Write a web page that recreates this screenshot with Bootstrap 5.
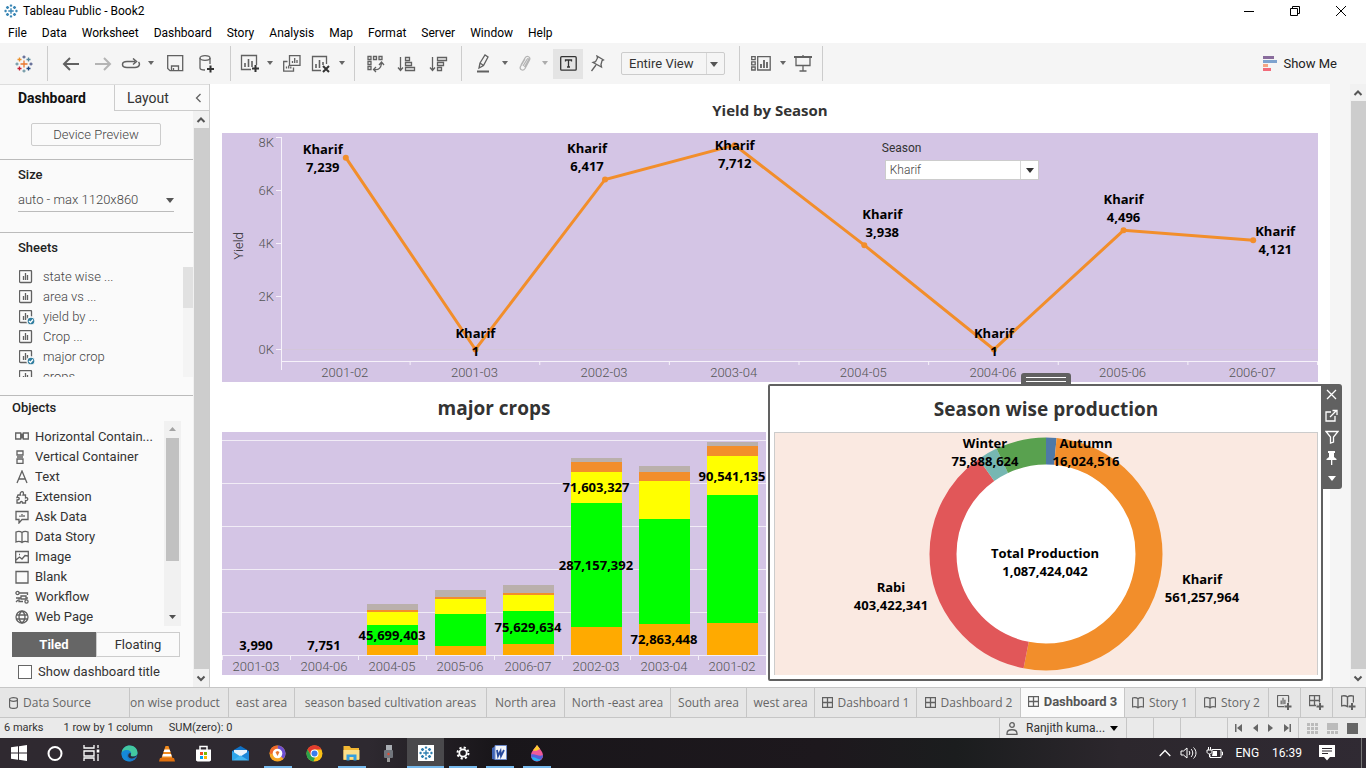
<!DOCTYPE html>
<html lang="en">
<head>
<meta charset="utf-8">
<meta name="viewport" content="width=device-width, initial-scale=1">
<title>Tableau Public - Book2</title>
<link rel="stylesheet" href="https://cdn.jsdelivr.net/npm/bootstrap@5.3.0/dist/css/bootstrap.min.css">
<style>
:root{--ui:Roboto,"Liberation Sans",sans-serif;--viz:"Open Sans","Noto Sans",sans-serif;--lilac:#d4c5e5;--line:#ccc;--dark:#616161}
body{font:13px/20px var(--ui);color:#333;background:#fff}
button,select,input{font:inherit;color:inherit}
svg{display:block;flex:none}
.ico{fill:none;stroke:#616161;stroke-width:1.3}
.app{min-height:100vh}
.plain{border:0;background:none;padding:0}
a{color:inherit;text-decoration:none}
/* window chrome */
.titlebar{height:22px;font-size:12px;color:#000}
.winbtns{gap:34px;padding-right:19px}
.menubar{height:22px;margin-bottom:-1px;font-size:12px;color:#000;gap:15px;padding-left:8px}
.toolbar{height:41px;background:#f5f5f5;padding-left:8px}
.toolbar button{height:30px;display:flex;align-items:center;justify-content:center}
.b-l{width:32px}.b-m{width:28px}.b-s{width:24px}.b-c{width:16px}
.b-on{width:30px;background:#e4e4e4!important}
.vsep{width:1px;height:35px;background:#ccc;margin:0 7px}
.combo{position:relative}
.combo select{appearance:none;border:1px solid #ccc;background:transparent;border-radius:2px}
.combo::after{content:"";position:absolute;right:7px;top:50%;margin-top:-2px;border:4px solid transparent;border-top:5px solid #555;border-bottom:0;pointer-events:none}
.combo.split::before{content:"";position:absolute;right:18px;top:1px;bottom:1px;width:1px;background:#d8d8d8}
.view-sel{margin:0 7px 0 10px;width:104px}
.view-sel select{width:100%;height:23px;padding:0 0 0 7px;line-height:18px}
.toolbar .showme{margin-right:29px;gap:6px;color:#222}
/* side pane */
.side{width:210px;background:#fafafa;border-right:1px solid var(--line)}
.side-tabs{height:27px;border-top:1px solid #ddd;font-size:14px}
.side-tabs .t1{width:114px;padding-left:18px;font-weight:700;color:#111;text-align:left}
.side-tabs .t2{border-left:1px solid var(--line);border-bottom:1px solid var(--line)}
.sbar{background:#f1f1f1;width:16px}
.sbar .thumb{background:#cdcdcd;margin:0 0 0 1px}
.side hr{margin:0;border-color:#bbb;opacity:1}
.side h2{font-size:13px;line-height:20px;margin:0;font-weight:500;color:#222}
.preview{width:130px;height:23px;border:1px solid var(--line);background:#fafafa;border-radius:2px;margin:12px 0 13px 31px;color:#444;line-height:20px;padding:0}
.size-sec{height:72px;padding:5px 18px 0}
.size-sel{width:156px;margin-top:3px}
.size-sel select{border-width:0 0 1px;border-color:#bbb;width:100%;height:24px;padding:0;border-radius:0;color:#444}
.size-sel::after{right:0}
.side h2.sheets-h{padding:5px 0 0 18px;margin-bottom:9px}
.sheets{height:110px;color:#444}
.sheets ul,.objs ul{margin:0;padding:0;list-style:none}
.sheets li{height:20px;gap:7px;padding-left:19px}
.mini{width:10px;background:linear-gradient(#e1e1e1 0 41px,#f4f4f4 41px)}
.side hr.objs-rule{margin-top:18px}
.side h2.objs-h{padding:2px 0 0 12px;margin-bottom:3px}
.objs{height:206px;padding-right:12px}
.objs ul{padding-top:6px}
.objs li{height:20px;gap:6px;padding-left:15px;color:#333}
.objs svg{width:14px;height:14px}
.objs .obar{width:17px;background:#f1f1f1;height:205px}
.objs .obar svg{width:17px;height:17px}
.othumb{width:13px;height:123px;margin-left:2px;background:#c1c1c1}
.toggle{height:25px;width:168px;margin:5px 0 0 12px}
.toggle button{width:50%;border:1px solid var(--line);background:#fafafa;padding:0}
.toggle .on{background:#666;border-color:#666;color:#fff;font-weight:700}
.tick{appearance:none;width:14px;height:14px;border:1px solid #666;background:#fff;margin:0}
.tick-row{gap:6px;margin:5px 0 0 18px}
.light{font-weight:300}
/* dashboard */
.pane-title{font-family:var(--viz);font-weight:700;color:#333;margin:0;text-align:center}
.t-s{font-size:15px;line-height:49px;padding-top:2px;height:49px}
.t-l{font-size:19px;line-height:48px;height:48px}
.chart-line{margin:0 12px 2px;position:relative}
.chart-line svg,.donut svg{width:100%}
.axis{font:300 13px var(--ui);fill:#555}
.lbl{font:700 13px var(--viz);fill:#000}
.filter{top:5px;left:60.2%;font-size:12px}
.filter select{height:20px;width:100%;background:#fff;color:#444;padding:0 4px;border-radius:0;line-height:18px}
.filter .combo{margin:2px 0 0 3px;width:154px}
.filter .combo::after{right:5px;border-top-color:#333}
.bottom{display:grid;grid-template-columns:544fr 555fr;gap:2px;padding:0 7px 6px 12px}
.bars{background:var(--lilac);margin-bottom:6px}
.plot{border-bottom:1px solid #f4f0f8;background:repeating-linear-gradient(to top,transparent 0 42px,#f1ecf6 42px 43px);height:224px}
.col-bar{flex:1 1 0;min-width:0;display:flex;flex-direction:column;justify-content:flex-end;align-items:center}
.seg{width:75%;display:flex;align-items:center;justify-content:center;font:700 13px/14px var(--viz);color:#000;white-space:nowrap}
.seg span{position:relative}
.xaxis span{flex:1 1 0;text-align:center;color:#555;font-weight:300;height:19px;line-height:22px;background:linear-gradient(#f4f0f8,#f4f0f8) 0 0/1px 4px no-repeat}
.picked{border:2px solid var(--dark);border-radius:2px;position:relative;padding:0 3px 4px 4px}
.t-in{height:46px;line-height:46px}
.donut{background:#fae9e1;border:1px solid var(--line);border-bottom:0}
.grip{position:absolute;left:50%;top:-13px;width:50px;height:12px;margin-left:-25px;background:var(--dark);border-radius:3px 3px 0 0;padding:4px 5px}
.grip::before{content:"";display:block;height:5px;border:solid #fff;border-width:1px 0}
.tools{position:absolute;left:100%;top:-2px;width:21px;height:105px;background:var(--dark);border-radius:0 3px 3px 0}
.tools .ico{stroke:#fff}
.tools button{height:21px;display:flex;align-items:center;justify-content:center}
.gutter{width:20px;background:#f5f5f5}
/* bottom strips */
.tabs{display:grid;grid-template-columns:130fr 99fr 66fr 192fr 78fr 106fr 76fr 68fr 102fr 104fr 104fr 71fr 73fr 32fr 32fr 33fr;height:31px;border-top:1px solid #c6c6c6;border-bottom:1px solid #c6c6c6;background:#e6e6e6;font:12px/16px var(--viz);color:#666}
.tabs a{display:flex;align-items:center;justify-content:center;gap:5px;border-right:1px solid #c6c6c6;white-space:nowrap;overflow:hidden}
.tabs a:nth-child(2){justify-content:flex-start}
.tabs a:first-child{justify-content:flex-start;padding-left:9px}
.tabs .cur{background:#fafafa;font:700 13px var(--ui);color:#555;padding-bottom:2px}
.status{height:20px;background:#eaeaea;font-size:11px}
.status .cell{border-left:1px solid #c6c6c6;height:20px}
.status .user{width:127px;padding-left:6px;font-size:12px}
.status>span{white-space:pre}
.c27{width:27px}.c47{width:47px}.nav-ic{width:71px;padding:0 2px}.views{width:68px;padding:0 3px}
.taskbar{height:30px;background:linear-gradient(90deg,#2f2930 0,#2e2930 27%,#19161a 36%,#1d181d 60%,#1b1d1e 70%,#2c272d 82%,#302a33);color:#fff;font-size:12px}
.taskbar button{width:37px;height:30px;display:flex;align-items:center;justify-content:center;position:relative}
.taskbar .run::after{content:"";position:absolute;left:5px;right:4px;bottom:0;height:2px;background:#76b9ed}
.taskbar .act{background:#4a494c}
.taskbar .act::after{left:0;right:0}
.tray{gap:9px;padding-right:4px}
.desk{width:1px;height:30px;background:#777;margin-left:8px}
</style>
</head>
<body>
<svg width="0" height="0" class="position-absolute" aria-hidden="true">
<symbol id="caret" viewBox="0 0 8 5"><path d="M1 0h6L4 4z" fill="#666" stroke="none"/></symbol>
<symbol id="sheet" viewBox="0 0 14 14"><rect x=".5" y=".5" width="12" height="12" rx="1"/><path d="M4.500 10V6M6.500 10V3M8.500 10V5"/></symbol>
<symbol id="dash" viewBox="0 0 12 12"><path d="M.5.5h10v10H.5zM5.500.5v10M.5 5.500h10"/></symbol>
<symbol id="story" viewBox="0 0 12 12"><path d="M.5 1c2-.6 4-.4 5.500.8C7.500.6 9.500.4 11.500 1v9c-2-.6-4-.4-5.500.8C4.500 9.600 2.500 9.400.5 10zM6 2v9"/></symbol>
<symbol id="tab" viewBox="0 0 18 18"><path d="M9 5.500v7M5.500 9h7M9 .5v3M7.500 2h3M9 14.500v3M7.500 16h3M2 7.500v3M.5 9h3M16 7.500v3M14.500 9h3M4.500 2.500v4M2.500 4.500h4M13.500 2.500v4M11.500 4.500h4M4.500 11.500v4M2.500 13.500h4M13.500 11.500v4M11.500 13.500h4"/></symbol>
<symbol id="up" viewBox="0 0 16 17"><path d="M4.500 11 8 7.500 11.500 11" fill="none" stroke="#555" stroke-width="2"/></symbol>
<symbol id="down" viewBox="0 0 16 17"><path d="M4.500 7 8 10.500 11.500 7" fill="none" stroke="#555" stroke-width="2"/></symbol>
</svg>

<div class="app d-flex flex-column">
<header>
 <div class="titlebar d-flex align-items-center justify-content-between">
  <div class="d-flex align-items-center"><svg width="15" height="15" class="ico ms-1 me-1" stroke-width="2"><use href="#tab" width="14" height="14" style="stroke:#3b87b5;stroke-width:1.800"/></svg>Tableau Public - Book2</div>
  <div class="winbtns d-flex align-items-center">
   <button class="plain" aria-label="Minimize"><svg width="12" height="12" stroke="#000"><path d="M1 6.500h10"/></svg></button>
   <button class="plain" aria-label="Restore"><svg width="12" height="12" stroke="#000" fill="none"><path d="M1.500 3.500h7v7h-7zM3.500 3V1.500h7v7H9"/></svg></button>
   <button class="plain" aria-label="Close"><svg width="12" height="12" stroke="#000"><path d="M1 1l10 10M11 1L1 11"/></svg></button>
  </div>
 </div>
 <nav class="menubar d-flex align-items-center">
  <a href="#">File</a><a href="#">Data</a><a href="#">Worksheet</a><a href="#">Dashboard</a><a href="#">Story</a><a href="#">Analysis</a><a href="#">Map</a><a href="#">Format</a><a href="#">Server</a><a href="#">Window</a><a href="#">Help</a>
 </nav>
 <div class="toolbar d-flex align-items-center" role="toolbar">
  <button class="plain b-l" aria-label="Start page"><svg width="18" height="18" fill="none" stroke-width="1.300"><path stroke="#e8762d" d="M9 5.500v7M5.500 9h7"/><path stroke="#5c6692" d="M9 .5v3M7.500 2h3"/><path stroke="#7199a6" d="M9 14.500v3M7.500 16h3M2 7.500v3M.5 9h3"/><path stroke="#eb912c" d="M4.500 2.500v4M2.500 4.500h4"/><path stroke="#59879b" d="M13.500 2.500v4M11.500 4.500h4"/><path stroke="#c72035" d="M4.500 11.500v4M2.500 13.500h4"/><path stroke="#1f447e" d="M13.500 11.500v4M11.500 13.500h4"/><path stroke="#5c6692" d="M16 7.500v3M14.500 9h3"/></svg></button>
  <span class="vsep"></span>
  <button class="plain b-l" aria-label="Undo"><svg class="ico" width="18" height="16" style="stroke-width:2"><path d="M17 8H2M8 2 2 8l6 6"/></svg></button>
  <button class="plain b-l" aria-label="Redo"><svg class="ico" width="18" height="16" style="stroke-width:2;stroke:#b4b4b4"><path d="M1 8h15M10 2l6 6-6 6"/></svg></button>
  <button class="plain b-s" aria-label="Replay"><svg class="ico" width="20" height="12"><path d="M11 9.500H6c-6 0-6-6 0-6h8M11 9.500h3c5 0 5-4 3.500-5.500M12 .5l3.500 3L12 6.500" stroke-width="1.500"/></svg></button>
  <button class="plain b-c" aria-label="Replay menu"><svg width="8" height="5"><use href="#caret"/></svg></button>
  <button class="plain b-l" aria-label="Save"><svg class="ico" width="17" height="17"><path d="M.7.7h15v15H3L.7 13.500zM4.500 15.500V11h7v4.500M6.500 13v2.500"/></svg></button>
  <button class="plain b-l" aria-label="New data source"><svg class="ico" width="17" height="18"><ellipse cx="6" cy="3" rx="5" ry="2.300"/><path d="M1 3v10c0 1 2 2 5 2M11 3v6"/><path d="M11.500 10.500v7M8 14h7" stroke="#333" stroke-width="2"/></svg></button>
  <span class="vsep"></span>
  <button class="plain b-s" aria-label="New sheet"><svg class="ico" width="20" height="19"><path d="M11 15.500H1.500V1.500h15V11"/><path d="M5 13V9M8.500 13V5M12 13V7" stroke-width="1.600"/><path d="M15.500 11v7M12 14.500h7" stroke="#333" stroke-width="2"/></svg></button>
  <button class="plain b-c" aria-label="New sheet menu"><svg width="8" height="5"><use href="#caret"/></svg></button>
  <button class="plain b-m" aria-label="Duplicate"><svg class="ico" width="18" height="17"><path d="M6.500.7h10.500v9.600H6.500zM4.500 6.500H.7v9.700h9.800V12.500M9.500 8V6M11.700 8V3M14 8V5M3.500 13.500v-2M5.700 13.500v-3M7.800 13.500v-2"/></svg></button>
  <button class="plain b-m" aria-label="Clear sheet"><svg class="ico" width="19" height="18"><path d="M10 15.500H1.500V1.500h14V9"/><path d="M5 13V9M8.500 13V5M12 10V7" stroke-width="1.600"/><path d="M12 11l6 6M18 11l-6 6" stroke="#333" stroke-width="2"/></svg></button>
  <button class="plain b-c" aria-label="Clear menu"><svg width="8" height="5"><use href="#caret"/></svg></button>
  <span class="vsep ms-1"></span>
  <button class="plain b-m" aria-label="Swap"><svg class="ico" width="18" height="18"><path d="M1 1.500h3v3H1zM6.500 1.500h3v3h-3zM12 1.500h3v3h-3zM1 6.500h3v3H1zM1 11.500h3v3H1zM7 14.500c5 1 7-2 7.500-6M12 10l2.500-3L17 10M9 12l-2.500 2.500L9 17"/></svg></button>
  <button class="plain b-l" aria-label="Sort ascending"><svg class="ico" width="19" height="16"><path d="M3.500 1v13M1 11.500l2.500 3 2.500-3M8.500 1.500h4v3h-4zM8.500 6.500h6v3h-6zM8.500 11.500h9v3h-9z"/></svg></button>
  <button class="plain b-l" aria-label="Sort descending"><svg class="ico" width="19" height="16"><path d="M3.500 1v13M1 11.500l2.500 3 2.500-3M8.500 1.500h9v3h-9zM8.500 6.500h6v3h-6zM8.500 11.500h4v3h-4z"/></svg></button>
  <span class="vsep"></span>
  <button class="plain b-m" aria-label="Highlight"><svg class="ico" width="14" height="19"><path d="M4 9l5-8 3 2-4.500 8.500L3 14zM4 9l3.500 2.500"/><path d="M1 17.500h12" stroke-width="2"/></svg></button>
  <button class="plain b-c" aria-label="Highlight menu"><svg width="8" height="5"><use href="#caret"/></svg></button>
  <button class="plain b-s" aria-label="Group"><svg class="ico" width="14" height="17" style="stroke:#b4b4b4"><path d="M3 10l4-7c2-3 6-1 4.500 2L7 13.500c-2 3-6 1-4.500-2L7 4M5 11l4-6.500c1-1.500 2-.5 1.500.5L6.500 12"/></svg></button>
  <button class="plain b-c" aria-label="Group menu"><svg width="8" height="5" opacity=".5"><use href="#caret"/></svg></button>
  <button class="plain b-on" aria-label="Show mark labels"><svg class="ico" width="17" height="15" style="stroke:#333"><rect x=".7" y=".7" width="15.500" height="13.500" rx="1"/><path d="M5.500 5.500V4h6v1.500M8.500 4v7M7 11h3"/></svg></button>
  <button class="plain b-m" aria-label="Fix axes"><svg class="ico" width="15" height="17"><path d="M7 1l6.500 4-1.500.8-1 3.700.5 2.500L3 7.500l2.500-.8L7.500 3zM6 10l-4.500 6"/></svg></button>
  <div class="combo split view-sel"><select aria-label="Fit"><option>Entire View</option></select></div>
  <span class="vsep"></span>
  <button class="plain b-m" aria-label="Show cards"><svg class="ico" width="20" height="15"><path d="M.7.7h3.500v3H.7zM.7 5.800h3.500v3H.7zM.7 11h3.500v3H.7zM6.700.7h12.500V14H6.700z"/><path d="M10 12V8M13 12V4M16 12V6" stroke-width="1.800"/></svg></button>
  <button class="plain b-c" aria-label="Cards menu"><svg width="8" height="5"><use href="#caret"/></svg></button>
  <button class="plain b-s" aria-label="Presentation mode"><svg class="ico" width="18" height="17"><path d="M2 2v8.500h14V2M9 10.500V16M5.500 16h7M9 0v2"/><path d="M0 2h18" stroke-width="2"/></svg></button>
  <span class="vsep"></span>
  <button class="plain showme ms-auto"><svg width="14" height="15"><path fill="#896c9c" d="M0 0h11v3H0z"/><path fill="#7ea3cf" d="M0 4h14v3H0z"/><path fill="#f3a583" d="M0 8h5v3H0z"/><path fill="#f26b7a" d="M0 12h8v3H0z"/></svg>Show Me</button>
 </div>
</header>

<main class="d-flex flex-grow-1">
 <aside class="side d-flex flex-column flex-shrink-0">
  <div class="side-tabs d-flex">
   <button class="plain t1">Dashboard</button>
   <button class="plain t2 d-flex flex-grow-1 align-items-center justify-content-between ps-2"><span class="ps-1">Layout</span><svg class="ico me-2" width="6" height="10"><path d="M5.500 1l-4 4 4 4"/></svg></button>
  </div>
  <div class="d-flex flex-grow-1">
   <div class="flex-grow-1 overflow-hidden">
    <button class="preview light d-block">Device Preview</button>
    <hr>
    <section class="size-sec">
     <h2>Size</h2>
     <div class="combo size-sel light"><select aria-label="Size"><option>auto - max 1120x860</option></select></div>
    </section>
    <hr>
    <h2 class="sheets-h">Sheets</h2>
    <div class="sheets light d-flex justify-content-between overflow-hidden" id="sheets">
     <ul></ul>
     <div class="mini"></div>
    </div>
    <hr class="objs-rule">
    <h2 class="objs-h">Objects</h2>
    <div class="objs d-flex justify-content-between">
     <ul></ul>
     <div class="obar d-flex flex-column">
      <svg><path d="M5 10h7L8.500 6z" fill="#a3a3a3"/></svg><div class="othumb"></div><svg class="mt-auto"><path d="M5 6h7l-3.500 4z" fill="#505050"/></svg>
     </div>
    </div>
    <div class="toggle d-flex"><button class="on">Tiled</button><button>Floating</button></div>
    <label class="d-flex align-items-center tick-row"><input type="checkbox" class="tick">Show dashboard title</label>
   </div>
   <div class="sbar d-flex flex-column"><svg width="16" height="17"><use href="#up"/></svg><div class="thumb flex-grow-1"></div><svg width="16" height="18"><use href="#down"/></svg></div>
  </div>
 </aside>

 <div class="flex-grow-1 d-flex flex-column">
  <h1 class="pane-title t-s">Yield by Season</h1>
  <div class="chart-line">
   <svg id="yield" viewBox="0 0 1096 249" role="img" aria-label="Yield by Season"></svg>
   <div class="filter position-absolute"><label for="season">Season</label><div class="combo split"><select id="season" class="light"><option>Kharif</option></select></div></div>
  </div>
  <div class="bottom flex-grow-1">
   <section class="d-flex flex-column"><h2 class="pane-title t-l">major crops</h2>
    <div class="bars flex-grow-1 d-flex flex-column"><div class="plot d-flex flex-grow-1" id="plot"></div><div class="xaxis d-flex" id="xaxis"></div></div>
   </section>
   <section class="picked d-flex flex-column">
    <div class="grip"></div>
    <h2 class="pane-title t-l t-in">Season wise production</h2>
    <div class="donut flex-grow-1"><svg id="donut" viewBox="0 0 542 242" role="img" aria-label="Season wise production"></svg></div>
    <div class="tools d-flex flex-column align-items-center">
     <button class="plain" aria-label="Remove"><svg class="ico" width="13" height="13"><path d="M2 2l9 9M11 2l-9 9"/></svg></button>
     <button class="plain" aria-label="Go to sheet"><svg class="ico" width="13" height="13"><path d="M6 3H1v9h9V7M5 8l6-6M7.500 1.500H12V6"/></svg></button>
     <button class="plain" aria-label="Use as filter"><svg class="ico" width="14" height="14"><path d="M1 1.500h12L8.500 7v5l-3 1V7z"/></svg></button>
     <button class="plain" aria-label="Fix"><svg width="11" height="14" fill="#fff"><path d="M2 0h7v2H8v4l2.500 2v1H.5V8L3 6V2H2zM5 9h1.300v5H5z"/></svg></button>
     <button class="plain" aria-label="More"><svg width="8" height="5" fill="#fff"><path d="M0 0h8L4 5z"/></svg></button>
    </div>
   </section>
  </div>
 </div>
 <div class="gutter"></div>
 <div class="sbar d-flex flex-column"><svg width="16" height="17"><use href="#up"/></svg><div class="thumb flex-grow-1"></div><svg width="16" height="18"><use href="#down"/></svg></div>
</main>

<footer>
 <nav class="tabs">
  <a href="#"><svg class="ico" width="9" height="12"><ellipse cx="4.500" cy="2.500" rx="4" ry="1.800"/><path d="M.5 2.500v7c0 2.500 8 2.500 8 0v-7"/></svg>Data Source</a>
  <a href="#">on wise product</a><a href="#">east area</a><a href="#">season based cultivation areas</a><a href="#">North area</a><a href="#">North -east area</a><a href="#">South area</a><a href="#">west area</a>
  <a href="#"><svg class="ico" width="11" height="11"><use href="#dash" width="12" height="12"/></svg>Dashboard 1</a>
  <a href="#"><svg class="ico" width="11" height="11"><use href="#dash" width="12" height="12"/></svg>Dashboard 2</a>
  <a href="#" class="cur" aria-current="page"><svg class="ico" width="11" height="11"><use href="#dash" width="12" height="12"/></svg>Dashboard 3</a>
  <a href="#"><svg class="ico" width="12" height="12"><use href="#story"/></svg>Story 1</a>
  <a href="#"><svg class="ico" width="12" height="12"><use href="#story"/></svg>Story 2</a>
  <a href="#" aria-label="New worksheet"><svg class="ico" width="16" height="16"><use href="#sheet" width="13" height="13"/><path d="M11 7.500v8M7 11.500h8" stroke="#e6e6e6" stroke-width="4"/><path d="M11 8v7M7.500 11.500h7" stroke-width="2"/></svg></a>
  <a href="#" aria-label="New dashboard"><svg class="ico" width="16" height="16"><use href="#dash" width="12" height="12"/><path d="M11 7.500v8M7 11.500h8" stroke="#e6e6e6" stroke-width="4"/><path d="M11 8v7M7.500 11.500h7" stroke-width="2"/></svg></a>
  <a href="#" aria-label="New story"><svg class="ico" width="16" height="16"><use href="#story" width="13" height="13"/><path d="M11 7.500v8M7 11.500h8" stroke="#e6e6e6" stroke-width="4"/><path d="M11 8v7M7.500 11.500h7" stroke-width="2"/></svg></a>
 </nav>
 <div class="status d-flex">
  <span class="ms-1 me-3">6 marks</span><span class="me-3 ms-1">1 row by 1 column</span><span>SUM(zero): 0</span>
  <button class="plain cell user d-flex align-items-center ms-auto"><svg class="ico" width="12" height="13"><circle cx="6" cy="3" r="2.300"/><path d="M1 11.500c0-5 10-5 10 0v.8H1z"/></svg><span class="ms-2 me-auto">Ranjith kuma...</span><svg width="8" height="5" class="me-2"><path d="M0 0h8L4 5z"/></svg></button>
  <span class="cell c27"></span><span class="cell c27"></span><span class="cell c47"></span>
  <span class="cell nav-ic d-flex align-items-center justify-content-around">
   <button class="plain" aria-label="First"><svg width="8" height="8" fill="#666"><path d="M0 0h1.500v8H0zM7 0v8L2 4z"/></svg></button><button class="plain" aria-label="Previous"><svg width="5" height="8" fill="#666"><path d="M5 0v8L0 4z"/></svg></button><button class="plain" aria-label="Next"><svg width="5" height="8" fill="#666"><path d="M0 0v8l5-4z"/></svg></button><button class="plain" aria-label="Last"><svg width="8" height="8" fill="#666"><path d="M6.500 0H8v8H6.500zM1 0v8l5-4z"/></svg></button>
  </span>
  <span class="cell views d-flex align-items-center justify-content-around">
   <button class="plain" aria-label="Sheet sorter"><svg width="11" height="11" fill="#bbb"><path d="M0 0h3v3H0zM4 0h3v3H4zM8 0h3v3H8zM0 4h3v3H0zM4 4h3v3H4zM8 4h3v3H8zM0 8h3v3H0zM4 8h3v3H4zM8 8h3v3H8z"/></svg></button><button class="plain" aria-label="Filmstrip"><svg width="11" height="11" fill="#bbb"><path d="M0 0h11v7H0zM0 8h3v3H0zM4 8h3v3H4zM8 8h3v3H8z"/></svg></button><button class="plain" aria-label="Tabs"><svg width="11" height="11"><path fill="#666" d="M0 0h11v11H0z"/></svg></button>
  </span>
 </div>
 <div class="taskbar d-flex align-items-center justify-content-between">
  <div class="d-flex">
   <button class="plain" aria-label="Start"><svg width="16" height="16" fill="#fff"><path d="M0 2.300l7-1v6.200H0zM8 1.200L16 0v7.500H8zM0 8.500h7v6.200l-7-1zM8 8.500h8V16l-8-1.200z"/></svg></button>
   <button class="plain" aria-label="Cortana"><svg width="17" height="17"><circle cx="8" cy="8.500" r="6.500" fill="none" stroke="#fff" stroke-width="2"/></svg></button>
   <button class="plain" aria-label="Task view"><svg width="19" height="16" stroke="#fff" fill="none" stroke-width="1.300"><path d="M1 0v3h10V0M1 6h10v5H1zM1 16v-3h10v3M15 0v3M15 9v7"/><path d="M13.700 4.500h2.600v3h-2.600z" fill="#fff" stroke="none"/></svg></button>
   <button class="plain" aria-label="Edge"><svg width="17" height="17"><circle cx="8.500" cy="8.500" r="8" fill="#1b78c8"/><path d="M.6 8C1 3 5 .5 8.500.5c5 0 8 3.500 8 7 0 3-2.500 4-5 4-2 0-2-1-1.500-2 .8-2-.8-4-3.500-4C4 5.500 1.500 6 .6 8z" fill="#43c8a0"/><path d="M.6 8C2 4.500 8 4 9.500 7.500 8 7 6.500 8 6 10c-.5 3 2 5.500 5 6C5 17.500 0 14 .6 8z" fill="#1589d8"/><path d="M9.500 8c1 1-.5 2 .5 3 1.500 1 4 .6 6.500-.8C15 13 10 14.500 8 12.500 6.500 11 7.500 8 9.500 8z" fill="#2b2a33"/></svg></button>
   <button class="plain" aria-label="VLC"><svg width="16" height="17"><path d="M6.500 1h3l4 12h-11z" fill="#f28a1c"/><path d="M5.500 4.500h5l1 2.500h-7zM4 9h8l.8 2.500H3.200z" fill="#fff"/><path d="M1 13h14l1 3.500H0z" fill="#e0700d"/></svg></button>
   <button class="plain" aria-label="Store"><svg width="17" height="17"><path d="M5 5V1.500h7V5" fill="none" stroke="#fff" stroke-width="1.500"/><path d="M1 4.500h15v11l-1.500 1h-12l-1.500-1z" fill="#fff"/><path fill="#f25022" d="M5 7h3v3H5z"/><path fill="#7fba00" d="M9 7h3v3H9z"/><path fill="#00a4ef" d="M5 11h3v3H5z"/><path fill="#ffb900" d="M9 11h3v3H9z"/></svg></button>
   <button class="plain" aria-label="Mail"><svg width="17" height="16"><path d="M0 6l8.500-5L17 6v9H0z" fill="#1072c6"/><path d="M2 5h13v6H2z" fill="#e8f2fb"/><path d="M0 6l8.500 5.500L0 15.500z" fill="#2fa5ea"/><path d="M17 6l-8.500 5.500 8.500 4z" fill="#1b86d8"/><path d="M0 15.500l8.500-5 8.500 5z" fill="#43b6f2"/></svg></button>
   <button class="plain run" aria-label="Browser"><svg width="17" height="17"><circle cx="8.500" cy="8.500" r="8" fill="#f6a623"/><path d="M8.500.5a8 8 0 0 1 6 13.300L8.500 8z" fill="#6d4fd0"/><path d="M.5 8.500a8 8 0 0 1 8-8v4L3 9z" fill="#f0682c"/><circle cx="8.500" cy="8.500" r="4.800" fill="#fff"/><path d="M6.500 7l2 4 2-4-2-1z" fill="#e8762d"/></svg></button>
   <button class="plain" aria-label="Chrome"><svg width="17" height="17"><circle cx="8.500" cy="8.500" r="8" fill="#fbc116"/><path d="M1.500 4.500a8 8 0 0 1 14 0h-7L5 10.500z" fill="#e33b2e"/><path d="M1.500 4.500L5 10.500l4 2-1.500 4A8 8 0 0 1 1.500 4.500z" fill="#2ba24c"/><circle cx="8.500" cy="8.500" r="4" fill="#fff"/><circle cx="8.500" cy="8.500" r="3" fill="#3a7cec"/></svg></button>
   <button class="plain run" aria-label="File Explorer"><svg width="17" height="15"><path d="M.5 0h6l1.500 2h8v12H.5z" fill="#f2b732"/><path d="M.5 4h16v9.500H.5z" fill="#fde08a"/><path d="M3.500 14.500V8.500h10v6h-3V11h-4v3.500z" fill="#35a0e0"/></svg></button>
   <button class="plain" aria-label="Recorder"><svg width="10" height="17"><rect x="2" y="0" width="6" height="7" fill="#a9adb3"/><rect x="0" y="5" width="9" height="8" rx="1" fill="#72767d"/><path d="M3 13h3v4H3z" fill="#999"/><circle cx="4.500" cy="9" r="1.200" fill="#e34a33"/></svg></button>
   <button class="plain run act" aria-label="Tableau"><svg width="16" height="16" class="ico"><path d="M0 0h16v16H0z" fill="#fff" stroke="none"/><use href="#tab" x="1" y="1" width="14" height="14" style="stroke:#2f7fb0;stroke-width:1.800"/></svg></button>
   <button class="plain run" aria-label="Settings"><svg width="14" height="14" fill="none" stroke="#fff"><circle cx="7" cy="7" r="3.700" stroke-width="1.800"/><circle cx="7" cy="7" r="5.500" stroke-width="2" stroke-dasharray="2.160"/></svg></button>
   <button class="plain run" aria-label="Word"><svg width="15" height="16"><path d="M0 3l4-2v14l-4-1z" fill="#3e62b4"/><path d="M3 .5h11.500v14H3z" fill="#f2f5fb" stroke="#6d89c8"/><path d="M5 5l1 6 2.500-5 .5 5 3-6" fill="none" stroke="#274a9d" stroke-width="1.800"/></svg></button>
   <button class="plain run" aria-label="Paint 3D"><svg width="14" height="17"><path d="M7 0c2 3 6 6.500 6 10.500a6 6 0 0 1-12 0C1 6.500 5 3 7 0z" fill="#ef5a9a"/><path d="M7 0C5.500 2.500 4 4 3 5.500c3 1 5-.5 7-1.500C9 2.500 8 1.500 7 0z" fill="#ffcf2e"/><path d="M1 9.500c4-1.500 8 3 12 .5a6 6 0 0 1-12 .5z" fill="#5660d8"/><path d="M1.500 12.500c3-1.500 6 2 9.500 2a6 6 0 0 1-9.500-2z" fill="#27b4f2"/></svg></button>
  </div>
  <div class="tray d-flex align-items-center">
   <svg width="12" height="8" fill="none" stroke="#fff" stroke-width="1.300"><path d="M.7 7L6 1.500 11.300 7"/></svg>
   <svg width="17" height="14" fill="none" stroke="#fff"><path d="M1 5h2.500L7 2v10L3.500 9H1zM9 5c1 1 1 3 0 4M11 3c2.300 2 2.300 6 0 8M13.500 1.500c3.300 3 3.300 8 0 11"/></svg>
   <svg width="17" height="14" fill="none" stroke="#fff"><path d="M6 3.500h9v8H4V9M15.500 6h1v3h-1M1 4h5v2C6 8.500 1 8.500 1 6zM2.500 1v3M4.500 1v3M3.500 8v3"/><path d="M7 5h4v5H6z" fill="#fff" stroke="none"/></svg>
   <span class="ms-1">ENG</span><span class="mx-1">16:39</span>
   <svg width="17" height="17" class="ms-1"><path d="M0 0h16v12h-5l-3 3.500L5 12H0z" fill="#fff"/><path d="M3 3.500h10M3 6h10M3 8.500h6" stroke="#2c272d"/></svg>
   <span class="desk ms-3"></span>
  </div>
 </div>
</footer>
</div>
<script src="https://cdn.jsdelivr.net/npm/bootstrap@5.3.0/dist/js/bootstrap.bundle.min.js"></script>
<script>
// side pane lists
const check = '<circle cx="12" cy="12" r="4" fill="#2f7d9f" stroke="#fafafa"/><path d="M10 12l1.500 1.500 2.500-3" stroke="#fff"/>';
document.querySelector('#sheets ul').innerHTML = [['state wise ...'], ['area vs ...'], ['yield by ...', 1], ['Crop ...'], ['major crop', 1], ['crops ...']]
  .map(([t, used]) => `<li class="d-flex align-items-center text-nowrap"><svg class="ico" width="17" height="17"><use href="#sheet" x="0" y="1" width="14" height="14"/>${used ? check : ''}</svg>${t}</li>`).join('');
const shapes = {
  'Horizontal Contain...': '<path d="M.7 3h5v6h-5zM8.300 3h5v6h-5zM7 3.500v5"/>',
  'Vertical Container': '<path d="M2 1h6v4H2zM2 9h6v4.500H2zM2 7h6"/>',
  'Text': '<path d="M2 13L7 1l5 12M4 9h6"/>',
  'Extension': '<path d="M3 5h2.500C4 2 8.500 0 8.500 3.500L8 5h2.500v3c3-1.500 3 3.500 0 2.500V13H7.500c0-2-2-2-2.500 0H2v-3c3 0 3-3 0-2.500z"/>',
  'Ask Data': '<path d="M1 1.500h12v8H7L4 13V9.500H1zM5 7V5.500M7 7V4M9 7V5"/>',
  'Data Story': '<path d="M1 2c2-.8 4.500-.6 6 .6C8.500 1.400 11 1.200 13 2v10c-2-.8-4.500-.6-6 .6C5.500 11.400 3 11.200 1 12zM7 3v9"/>',
  'Image': '<path d="M.7 1.500h12.600v11H.7zM1 10l3.500-3L7 9l3-3.500L13 6M4 4.500h1"/>',
  'Blank': '<path d="M1 1.500h12v11.500H1z"/>',
  'Workflow': '<circle cx="2.500" cy="3" r="1.600"/><path d="M4 3h8.500v2M6 6h5v3H6zM1 8h5M11 8h2M4 8v3.500h4M3 10l-2 2"/><circle cx="11.500" cy="11.500" r="1.600"/>',
  'Web Page': '<circle cx="7" cy="7" r="6"/><path d="M7 1c-4 3-4 9 0 12 4-3 4-9 0-12M1 5h12M1 9h12"/>'
};
document.querySelector('.objs ul').innerHTML = Object.entries(shapes)
  .map(([t, s]) => `<li class="d-flex align-items-center text-nowrap"><svg class="ico" viewBox="0 0 14 14">${s}</svg>${t}</li>`).join('');

// line chart: [season, yield, label dx, label dy]
const pts = [['2001-02', 7239, -23, -4], ['2001-03', 1, 0, -11], ['2002-03', 6417, -18, -26], ['2003-04', 7712, 0, 5], ['2004-05', 3938, 18, -26], ['2004-06', 1, 0, -11], ['2005-06', 4496, 0, -26], ['2006-07', 4121, 22, -4]];
const x0 = 59, step = 1037 / 8, X = i => x0 + step * (i + .5), Y = v => 216.5 - v * 53 / 2000;
let s = '<rect width="1096" height="249" fill="#d4c5e5"/><path d="M59 216.500h1037" stroke="#d3c6da"/>';
s += `<path d="M59.500 4v233M59 228.500h1037" stroke="#f6f2fa"/>`;
for (let k = 0; k <= 8; k += 2) s += `<path d="M54 ${Y(k * 1000)}h5" stroke="#f6f2fa"/><text class="axis" x="52" y="${Y(k * 1000) + (k == 8 ? 9 : 4)}" text-anchor="end">${k}K</text>`;
s += '<text class="axis" style="fill:#222" transform="translate(21 113) rotate(-90)" text-anchor="middle">Yield</text>';
s += `<polyline fill="none" stroke="#f28e2b" stroke-width="3" points="${pts.map((p, i) => X(i) + ',' + Y(p[1])).join(' ')}"/>`;
pts.forEach((p, i) => {
  const x = X(i), y = Y(p[1]), lx = x + p[2], ly = y + p[3];
  s += `<circle cx="${x}" cy="${y}" r="3" fill="#f28e2b"/><path d="M${x + step / 2 - .5} 228v4" stroke="#f6f2fa"/>`;
  s += `<text class="axis" x="${x - 1}" y="244" text-anchor="middle">${p[0]}</text>`;
  s += `<text class="lbl" x="${lx}" y="${ly}" text-anchor="middle">Kharif</text><text class="lbl" x="${lx}" y="${ly + 18}" text-anchor="middle">${p[1].toLocaleString('en-US')}</text>`;
});
document.getElementById('yield').innerHTML = s;

// stacked bars, in millions: grey, orange, yellow, green, amber
const colors = ['#bab0ac', '#f28e2b', '#ffff00', '#00ff00', '#ffaa00'];
const stacks = [['2001-03', [0, 0, 0, 0, 47], 4, '3,990'], ['2004-06', [0, 0, 0, 0, 47], 4, '7,751'], ['2004-05', [14, 3, 32, 45.7, 23], 3, '45,699,403'], ['2005-06', [16, 5, 35, 72, 22], -1], ['2006-07', [18, 5, 37, 75.6, 26], 3, '75,629,634'], ['2002-03', [9, 23, 71.6, 287.2, 65], 3, '287,157,392', 2, '71,603,327'], ['2003-04', [14, 21, 88, 241, 72.9], 4, '72,863,448'], ['2001-02', [9, 23, 90.5, 297, 73], 2, '90,541,135']];
plot.innerHTML = stacks.map(([n, v, a, at, b, bt], c) => '<div class="col-bar">' + v.map((m, i) =>
  m ? `<div class="seg" style="height:${(m / 516.4 * 100).toFixed(2)}%;background:${c < 2 ? 'none' : colors[i]}">${i == a ? '<span>' + at + '</span>' : i == b ? '<span>' + bt + '</span>' : ''}</div>` : '').join('') + '</div>').join('');
xaxis.innerHTML = stacks.map(r => `<span>${r[0]}</span>`).join('');

// donut
const parts = [[16.02, '#4e79a7'], [561.26, '#f28e2b'], [403.42, '#e15759'], [30.83, '#76b7b2'], [75.89, '#59a14f']];
let at = 0, d = '<circle cx="271" cy="121" r="90" fill="#fff"/>';
for (const [v, c] of parts) {
  const p = v / 1087.42 * 100;
  d += `<circle cx="271" cy="121" r="103" fill="none" stroke="${c}" stroke-width="27" pathLength="100" stroke-dasharray="${p} ${100 - p}" stroke-dashoffset="${-at}" transform="rotate(-90 271 121)"/>`;
  at += p;
}
for (const [x, y, a, b] of [[210, 15, 'Winter', '75,888,624'], [311, 15, 'Autumn', '16,024,516'], [116, 159, 'Rabi', '403,422,341'], [427, 151, 'Kharif', '561,257,964'], [270, 125, 'Total Production', '1,087,424,042']])
  d += `<text class="lbl" text-anchor="middle" x="${x}" y="${y}">${a}</text><text class="lbl" text-anchor="middle" x="${x}" y="${y + 18}">${b}</text>`;
donut.innerHTML = d;
</script>
</body>
</html>
